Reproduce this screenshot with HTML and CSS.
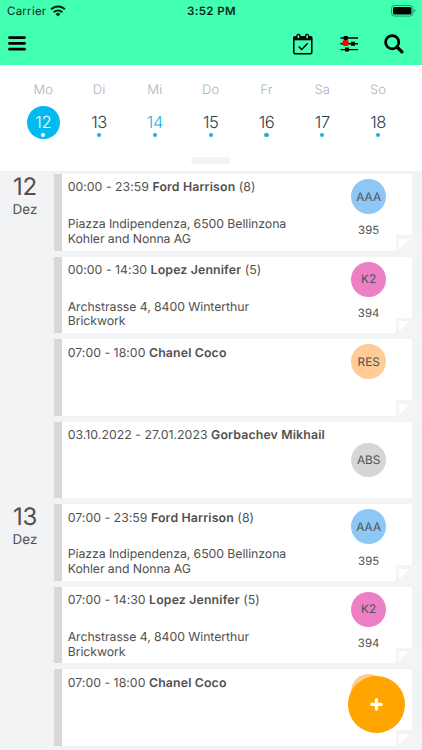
FILE: index.html
```html
<!DOCTYPE html>
<html lang="de">
<head>
<meta charset="utf-8">
<meta name="viewport" content="width=device-width, initial-scale=1">
<title>Agenda</title>
<link rel="stylesheet" href="styles.css">
</head>
<body>
<div class="app">
  <header class="header">
    <div class="status">
      <div class="carrier"><span>Carrier</span>
        <svg width="16" height="12" viewBox="0 0 16 12"><g fill="none" stroke="#06291b" stroke-width="2"><path d="M1.1 4.4a9.8 9.8 0 0 1 13.8 0"/><path d="M3.7 7.2a6.1 6.1 0 0 1 8.6 0"/></g><path d="M5.5 8.9a3.6 3.6 0 0 1 5 0L8 11.4z" fill="#06291b"/></svg>
      </div>
      <div class="clock">3:52 PM</div>
      <svg class="battery" width="25" height="12" viewBox="0 0 25 12"><rect x=".5" y=".5" width="21.5" height="10.6" rx="3" fill="none" stroke="#1d9a68"/><rect x="2" y="2" width="18.5" height="7.6" rx="1.6"/><path d="M23.3 4v3.6q1.2-.6 1.2-1.8T23.3 4z" fill="#1d9a68"/></svg>
    </div>
    <nav class="toolbar">
      <svg class="menu" width="18" height="16" viewBox="0 0 18 16"><g stroke="#000" stroke-width="2.8" stroke-linecap="round"><path d="M1.5 1.6h15M1.5 7.4h15M1.5 13.2h15"/></g></svg>
      <svg class="calendar" width="20" height="22" viewBox="0 0 20 22"><rect x=".8" y="4" width="18" height="16.8" rx="1.2" fill="none" stroke="#000" stroke-width="1.5"/><path d="M.5 3.3h18.6v4H.5z"/><path d="M4 6V3.2q0-1.9 1.5-1.9T7 3.2V6zM12.7 6V3.2q0-1.9 1.5-1.9t1.5 1.9V6z" fill="#42ffb2" stroke="#000" stroke-width="1.3"/><path d="m5.7 13.4 3 3 6-6.2" fill="none" stroke="#000" stroke-width="1.4"/></svg>
      <svg class="filters" width="19" height="18" viewBox="0 0 19 18"><path d="M.5 3h17.5M.5 8.8h17.5M.5 14.6h17.5" stroke="#000" stroke-width="1.4"/><path d="M3.7 1h4v4h-4zM11 6.8h4v4h-4zM5 12.6h4v4H5z"/><circle cx="5.6" cy="7.9" r="3.2" fill="#f00"/></svg>
      <svg class="search" width="20" height="20" viewBox="0 0 20 20"><circle cx="8.2" cy="8.2" r="6.6" fill="none" stroke="#000" stroke-width="2.7"/><path d="m13 13 4.9 4.9" stroke="#000" stroke-width="3.2" stroke-linecap="round"/></svg>
    </nav>
  </header>

  <section class="week">
    <div class="days">
      <div class="day"><span class="name">Mo</span><span class="date selected">12</span></div>
      <div class="day"><span class="name">Di</span><span class="date">13</span></div>
      <div class="day"><span class="name">Mi</span><span class="date today">14</span></div>
      <div class="day"><span class="name">Do</span><span class="date">15</span></div>
      <div class="day"><span class="name">Fr</span><span class="date">16</span></div>
      <div class="day"><span class="name">Sa</span><span class="date">17</span></div>
      <div class="day"><span class="name">So</span><span class="date">18</span></div>
    </div>
    <div class="handle"></div>
  </section>

  <main class="agenda">
    <section class="group">
      <div class="label"><span class="num">12</span><span class="month">Dez</span></div>
      <div class="cards">
        <article class="card folded">
          <div class="info"><p class="title">00:00 - 23:59 <b>Ford Harrison</b> (8)</p><p class="place">Piazza Indipendenza, 6500 Bellinzona<br>Kohler and Nonna AG</p></div>
          <div class="side"><span class="badge blue">AAA</span><span class="code">395</span></div>
        </article>
        <article class="card folded">
          <div class="info"><p class="title">00:00 - 14:30 <b>Lopez Jennifer</b> (5)</p><p class="place">Archstrasse 4, 8400 Winterthur<br>Brickwork</p></div>
          <div class="side"><span class="badge pink">K2</span><span class="code">394</span></div>
        </article>
        <article class="card folded">
          <div class="info"><p class="title">07:00 - 18:00 <b>Chanel Coco</b></p></div>
          <div class="side"><span class="badge peach">RES</span></div>
        </article>
        <article class="card">
          <div class="info"><p class="title">03.10.2022 - 27.01.2023 <b>Gorbachev Mikhail</b></p></div>
          <div class="side middle"><span class="badge gray">ABS</span></div>
        </article>
      </div>
    </section>
    <section class="group">
      <div class="label"><span class="num">13</span><span class="month">Dez</span></div>
      <div class="cards">
        <article class="card folded">
          <div class="info"><p class="title">07:00 - 23:59 <b>Ford Harrison</b> (8)</p><p class="place">Piazza Indipendenza, 6500 Bellinzona<br>Kohler and Nonna AG</p></div>
          <div class="side"><span class="badge blue">AAA</span><span class="code">395</span></div>
        </article>
        <article class="card folded">
          <div class="info"><p class="title">07:00 - 14:30 <b>Lopez Jennifer</b> (5)</p><p class="place">Archstrasse 4, 8400 Winterthur<br>Brickwork</p></div>
          <div class="side"><span class="badge pink">K2</span><span class="code">394</span></div>
        </article>
        <article class="card folded">
          <div class="info"><p class="title">07:00 - 18:00 <b>Chanel Coco</b></p></div>
          <div class="side"><span class="badge peach"></span></div>
        </article>
      </div>
    </section>
  </main>
  <button class="fab" aria-label="Neu"><svg width="14" height="14" viewBox="0 0 14 14"><path d="M6.5 1.7v9.4M1.8 6.4h9.4" stroke="#fff" stroke-width="3.2" stroke-linecap="round"/></svg></button>
</div>
</body>
</html>
```
FILE: styles.css
```css
* { box-sizing: border-box; }
body {
  margin: 0;
  font-family: Inter, "Liberation Sans", sans-serif;
  color: #505050;
  text-rendering: geometricPrecision;
}
p { margin: 0; }
svg { display: block; flex: none; }
.app {
  position: relative;
  width: 422px;
  height: 750px;
  overflow: hidden;
  background: #f2f3f5;
}
.header { height: 65.3px; background: #42ffb2; }
.status {
  display: grid;
  grid-template-columns: 1fr auto 1fr;
  align-items: center;
  height: 22px;
  padding: 0 6px 0 7px;
  font-size: 11.5px;
  color: #06291b;
}
.carrier { display: flex; align-items: center; gap: 4px; letter-spacing: .25px; }
.clock { font-weight: 600; letter-spacing: .4px; }
.battery { justify-self: end; }
.toolbar { display: flex; align-items: center; height: 43px; padding: 0 18.3px 0 8px; }
.calendar { margin-left: auto; }
.filters { margin-left: 27px; }
.search { margin-left: 25px; }

.week { height: 105.9px; padding: 16.5px 16px 0 15.4px; background: #fff; }
.days { display: grid; grid-template-columns: repeat(7, 1fr); }
.day { display: flex; flex-direction: column; align-items: center; }
.name { height: 16px; line-height: 17px; font-size: 13px; font-weight: 300; letter-spacing: .2px; color: #a9b3c1; }
.date {
  display: flex;
  flex-direction: column;
  align-items: center;
  width: 33px;
  height: 33px;
  margin-top: 8.2px;
  padding-top: 6px;
  border-radius: 50%;
  font-size: 16.5px;
  line-height: 20px;
  font-weight: 300;
  letter-spacing: -.4px;
  color: #2d4150;
}
.date::after { content: ""; width: 4.2px; height: 4.2px; margin-top: .9px; border-radius: 50%; background: #20add8; }
.today { color: #2bb0d8; }
.selected { background: #02b9f0; color: #fff; }
.selected::after { background: #fff; }
.handle { width: 39px; height: 7px; margin: 18px auto 0; border-radius: 4px; background: #f2f3f5; }

.agenda { padding-top: 3.1px; }
.group { display: flex; }
.label { display: flex; flex-direction: column; align-items: center; width: 54px; padding-right: 4px; }
.num { font-size: 24px; line-height: 26px; letter-spacing: -.3px; }
.month { font-size: 13.5px; line-height: 20.5px; }
.cards { width: 357.7px; }
.card {
  position: relative;
  display: flex;
  height: 76.4px;
  margin-bottom: 6.13px;
  border-left: 8px solid #d8d8d8;
  background: #fff;
}
.info { flex: 1; min-width: 0; padding: 5.2px 0 0 5.7px; font-size: 12.3px; line-height: 14.6px; white-space: nowrap; }
.title { height: 37.9px; line-height: 16px; letter-spacing: .03px; }
.title b { font-weight: 600; letter-spacing: .15px; }
.place { letter-spacing: -.07px; }
.side { display: flex; flex: none; flex-direction: column; align-items: center; width: 86px; padding-top: 5.1px; }
.middle { justify-content: center; padding-top: 0; }
.badge {
  display: grid;
  place-items: center;
  width: 34.8px;
  height: 34.8px;
  border-radius: 50%;
  font-size: 11.8px;
  line-height: 16px;
}
.blue { background: #8fc7f4; }
.pink { background: #ed80c4; }
.peach { background: #ffcb96; }
.gray { background: #d6d6d6; }
.code { margin-top: 8.3px; font-size: 11.4px; line-height: 16px; letter-spacing: .1px; }
.folded::after {
  content: "";
  position: absolute;
  right: -10.3px;
  bottom: -4px;
  width: 25.6px;
  height: 19.3px;
  background:
    linear-gradient(135deg, #fff 50%, transparent 50.5%) 3px 3.2px / 10px 10px no-repeat,
    #f4f4f4;
}
.fab {
  position: absolute;
  left: 348.3px;
  top: 676px;
  display: grid;
  place-items: center;
  width: 57.2px;
  height: 57.2px;
  padding: 0;
  border: 0;
  border-radius: 50%;
  background: #ffa500;
}
```
